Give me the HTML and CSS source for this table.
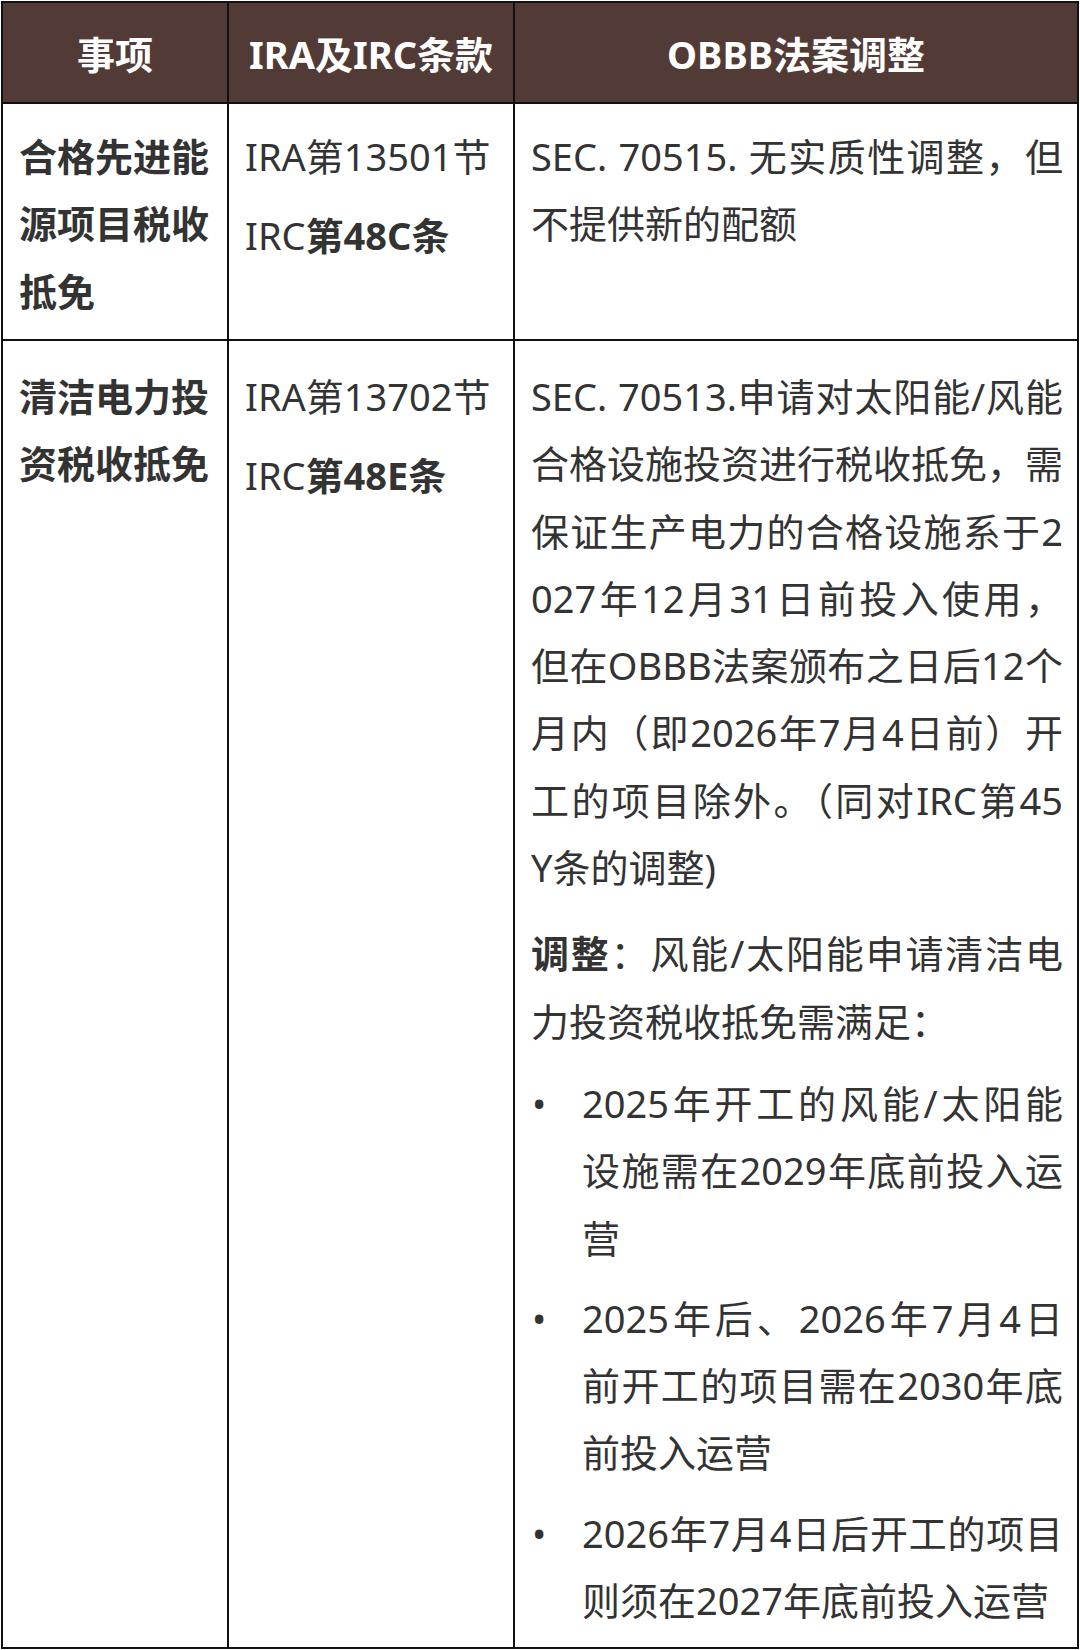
FILE: index.html
```html
<!DOCTYPE html>
<html lang="zh-CN">
<head>
<meta charset="utf-8">
<title>OBBB法案调整</title>
<link rel="stylesheet" href="styles.css">
</head>
<body>
<table class="tbl">
  <colgroup>
    <col class="c1">
    <col class="c2">
    <col class="c3">
  </colgroup>
  <thead>
    <tr class="hd">
      <th>事项</th>
      <th>IRA及IRC条款</th>
      <th>OBBB法案调整</th>
    </tr>
  </thead>
  <tbody>
    <tr class="r1">
      <td class="item"><p>合格先进能源项目税收抵免</p></td>
      <td class="law"><p>IRA第13501节</p><p>IRC<b>第48C条</b></p></td>
      <td class="adj">
        <p><span class="l">SEC. 70515. 无实质性调整，但</span><span class="l end">不提供新的配额</span></p>
      </td>
    </tr>
    <tr class="r2">
      <td class="item"><p>清洁电力投资税收抵免</p></td>
      <td class="law"><p>IRA第13702节</p><p>IRC<b>第48E条</b></p></td>
      <td class="adj">
        <p><span class="l">SEC. 70513.申请对太阳能/风能</span><span class="l">合格设施投资进行税收抵免，需</span><span class="l">保证生产电力的合格设施系于2</span><span class="l">027年12月31日前投入使用，</span><span class="l">但在OBBB法案颁布之日后12个</span><span class="l">月内（即2026年7月4日前）开</span><span class="l">工的项目除外。（同对IRC第45</span><span class="l end">Y条的调整)</span></p>
        <p><span class="l"><b>调整</b>：风能/太阳能申请清洁电</span><span class="l end">力投资税收抵免需满足：</span></p>
        <ul class="bul">
          <li><span class="dot">•</span><span class="txt"><span class="l">2025年开工的风能/太阳能</span><span class="l">设施需在2029年底前投入运</span><span class="l end">营</span></span></li>
          <li><span class="dot">•</span><span class="txt"><span class="l">2025年后、2026年7月4日</span><span class="l">前开工的项目需在2030年底</span><span class="l end">前投入运营</span></span></li>
          <li><span class="dot">•</span><span class="txt"><span class="l">2026年7月4日后开工的项目</span><span class="l end">则须在2027年底前投入运营</span></span></li>
        </ul>
      </td>
    </tr>
  </tbody>
</table>
</body>
</html>
```
FILE: styles.css
```css
html, body {
  margin: 0;
  padding: 0;
  background: #ffffff;
}

body {
  font-family: "Noto Sans", "Noto Sans CJK SC", sans-serif;
  color: #333333;
}

.tbl {
  width: 1076px;
  height: 1648px;
  margin: 1px 0 0 1px;
  border-collapse: collapse;
  table-layout: fixed;
  border: 2px solid #111111;
}

.c1 { width: 226px; }
.c2 { width: 286px; }
.c3 { width: 564px; }

.tbl th,
.tbl td {
  border: 2px solid #111111;
  vertical-align: top;
}

.hd {
  height: 101px;
}

.tbl th {
  padding: 0;
  background: #523b36;
  color: #ffffff;
  font-size: 38px;
  font-weight: 700;
  text-align: center;
  vertical-align: middle;
}

.tbl td {
  padding: 10px 14px 10px 16px;
  font-size: 38px;
  line-height: 67.3px;
}

.r1 td {
  padding-top: 7px;
}

.tbl p {
  margin: 12px 0 0;
}

.r1 {
  height: 237px;
}

.item {
  font-weight: 700;
}

.law b,
.adj b {
  font-weight: 700;
}

.adj {
  text-align: justify;
}

.adj p + p {
  margin-top: 19px;
}

.l {
  display: block;
  white-space: nowrap;
  text-align: justify;
  text-align-last: justify;
}

.l.end {
  text-align-last: auto;
}

.bul {
  list-style: none;
  margin: 0;
  padding: 0;
}

.bul li {
  display: flex;
  margin-top: 13px;
}

.bul li:first-child {
  margin-top: 15px;
}

.dot {
  flex: 0 0 51px;
  padding-left: 1px;
  box-sizing: border-box;
  font-size: 38px;
}

.txt {
  flex: 1;
  min-width: 0;
}
```
